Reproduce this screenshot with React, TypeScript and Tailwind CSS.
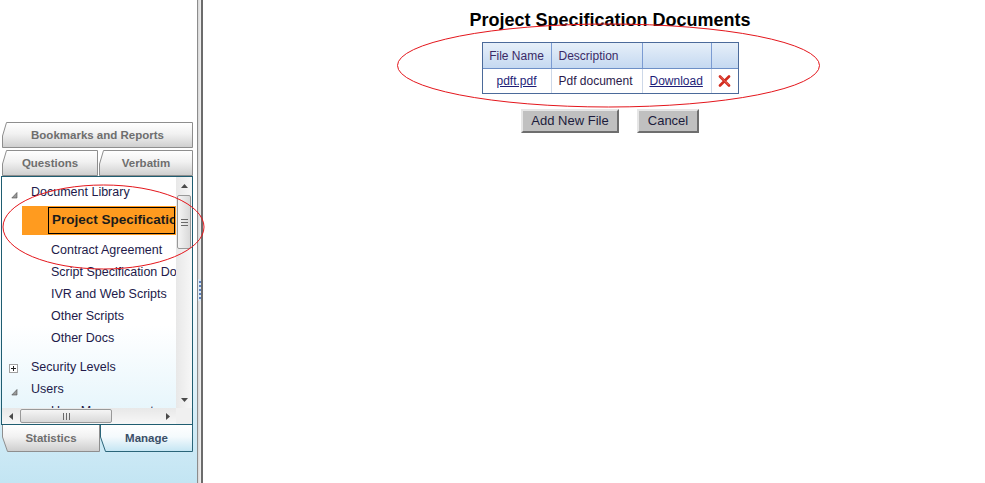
import React from "react";

type TabProps = {
  w: number;
  h: number;
  label: string;
  kind: "top" | "bottom";
  active?: boolean;
  id: string;
  className: string;
};

function Tab({ w, h, label, kind, active, id, className }: TabProps) {
  const fillD =
    kind === "top"
      ? `M0.5 ${h} V ${h - 12} L 4.5 0.5 H ${w - 0.5} V ${h} Z`
      : `M0.5 0 V 12 L 5.5 ${h - 0.5} H ${w - 0.5} V 0 Z`;
  const strokeD =
    kind === "top"
      ? `M0.5 ${h - 0.5} V ${h - 12} L 4.5 0.5 H ${w - 0.5} V ${h - 0.5} Z`
      : `M0.5 0 V 12 L 5.5 ${h - 0.5} H ${w - 0.5} V 0`;
  const stroke = active ? "#2b6579" : "#8e8e8e";
  return (
    <div className={`relative flex items-center justify-center shrink-0 ${className}`}>
      <svg className="absolute inset-0" width={w} height={h}>
        <defs>
          <linearGradient id={`g-${id}`} x1="0" y1="0" x2="0" y2="1">
            {active ? (
              <>
                <stop offset="0" stopColor="#ffffff" />
                <stop offset="0.45" stopColor="#f4fafd" />
                <stop offset="1" stopColor="#c4e5f3" />
              </>
            ) : (
              <>
                <stop offset="0" stopColor="#ffffff" />
                <stop offset="0.45" stopColor="#f1f1f1" />
                <stop offset="1" stopColor="#cdcdcd" />
              </>
            )}
          </linearGradient>
        </defs>
        <path d={fillD} fill={`url(#g-${id})`} />
        <path d={strokeD} fill="none" stroke={stroke} strokeWidth="1" />
      </svg>
      <span
        className={`relative font-bold text-[11.5px] leading-none ${
          kind === "top" ? "mt-[2px]" : "mt-[1px]"
        } ${active ? "text-[#3a4f68]" : "text-[#6e6e6e]"}`}
      >
        {label}
      </span>
    </div>
  );
}

const Arrow = () => (
  <svg width="7" height="8" viewBox="0 0 7 8" className="shrink-0">
    <polygon points="6,1.5 6,7 0.8,7" fill="#9a9a9a" stroke="#4a4a4a" strokeWidth="0.6" />
  </svg>
);

const PlusBox = () => (
  <svg width="9" height="9" viewBox="0 0 9 9" className="shrink-0">
    <rect x="0.5" y="0.5" width="8" height="8" fill="#ffffff" stroke="#a0a0a0" />
    <path d="M2 4.5 H7 M4.5 2 V7" stroke="#222222" strokeWidth="1" />
  </svg>
);

const RedX = () => (
  <svg width="13" height="12" viewBox="0 0 13 12">
    <path d="M2 1.5 L11 10.5 M11 1.5 L2 10.5" stroke="#d22a1e" strokeWidth="2.6" strokeLinecap="round" />
    <path d="M2.5 1.8 L10.5 9.8" stroke="#f07a6a" strokeWidth="0.8" strokeLinecap="round" />
  </svg>
);

function TreeChild({ label }: { label: string }) {
  return (
    <div className="h-[22px] flex items-center pl-[49px] whitespace-nowrap">{label}</div>
  );
}

export default function App() {
  return (
    <div className="relative flex w-[985px] h-[483px] overflow-hidden bg-white font-['Liberation_Sans',Arial,sans-serif]">
      {/* Left column */}
      <aside className="w-[197px] shrink-0 flex flex-col bg-gradient-to-b from-white from-[55%] to-[#c3e5f3]">
        <div className="h-[122px] shrink-0" />
        <Tab
          id="bm"
          w={191}
          h={26}
          kind="top"
          label="Bookmarks and Reports"
          className="w-[191px] h-[26px] ml-[2px]"
        />
        <div className="flex mt-[2px] ml-[2px]">
          <Tab id="q" w={96} h={26} kind="top" label="Questions" className="w-[96px] h-[26px]" />
          <Tab id="v" w={94} h={26} kind="top" label="Verbatim" className="w-[94px] h-[26px] ml-[1px]" />
        </div>

        {/* Tree panel */}
        <div className="ml-[1px] w-[192px] h-[249px] shrink-0 border border-[#1f5d71] flex flex-col bg-gradient-to-b from-white from-[60%] to-[#e3f4fb]">
          <div className="flex flex-1 min-h-0">
            <div className="relative w-[174px] overflow-hidden text-[12.5px] text-[#221a4a]">
              <div className="h-[22px] mt-[4px] flex items-center pl-[9px] whitespace-nowrap">
                <span className="w-[7px] mt-[5px]">
                  <Arrow />
                </span>
                <span className="ml-[13px]">Document Library</span>
              </div>
              <div className="h-[29px] mt-[3px] ml-[20px] bg-[#ff9b1f] flex items-center">
                <div className="ml-[26px] mr-[1px] h-[27px] flex-1 border border-black flex items-center overflow-hidden whitespace-nowrap pl-[3px] font-bold text-[13.5px] text-[#1b1b1b]">
                  Project Specification
                </div>
              </div>
              <div className="mt-[4px]">
                <TreeChild label="Contract Agreement" />
                <TreeChild label="Script Specification Documents" />
                <TreeChild label="IVR and Web Scripts" />
                <TreeChild label="Other Scripts" />
                <TreeChild label="Other Docs" />
              </div>
              <div className="h-[22px] mt-[7px] flex items-center pl-[7px] whitespace-nowrap">
                <span className="mt-[3px]">
                  <PlusBox />
                </span>
                <span className="ml-[13px]">Security Levels</span>
              </div>
              <div className="h-[22px] flex items-center pl-[9px] whitespace-nowrap">
                <span className="w-[7px] mt-[5px]">
                  <Arrow />
                </span>
                <span className="ml-[13px]">Users</span>
              </div>
              <TreeChild label="User Management" />
            </div>

            {/* vertical scrollbar */}
            <div className="w-[16px] flex flex-col bg-gradient-to-r from-[#e8e8e8] to-[#f7f7f7]">
              <div className="h-[17px] flex items-center justify-center">
                <svg width="7" height="4" viewBox="0 0 7 4">
                  <polygon points="0,4 3.5,0 7,4" fill="#4a4a4a" />
                </svg>
              </div>
              <div className="mt-[1px] mx-[1px] h-[54px] rounded-[2px] border border-[#999999] bg-gradient-to-r from-[#f5f5f5] to-[#d9d9d9] flex flex-col items-center justify-center gap-[2px]">
                <div className="w-[7px] h-[1px] bg-[#6a6a6a]" />
                <div className="w-[7px] h-[1px] bg-[#6a6a6a]" />
                <div className="w-[7px] h-[1px] bg-[#6a6a6a]" />
              </div>
              <div className="flex-1" />
              <div className="h-[17px] flex items-center justify-center">
                <svg width="7" height="4" viewBox="0 0 7 4">
                  <polygon points="0,0 3.5,4 7,0" fill="#4a4a4a" />
                </svg>
              </div>
            </div>
          </div>

          {/* horizontal scrollbar */}
          <div className="h-[16px] flex shrink-0">
            <div className="w-[174px] flex items-center bg-gradient-to-b from-[#e8e8e8] to-[#f7f7f7]">
              <div className="w-[17px] flex justify-center">
                <svg width="4" height="7" viewBox="0 0 4 7">
                  <polygon points="4,0 0,3.5 4,7" fill="#4a4a4a" />
                </svg>
              </div>
              <div className="ml-[1px] w-[92px] h-[14px] rounded-[2px] border border-[#999999] bg-gradient-to-b from-[#f5f5f5] to-[#d9d9d9] flex items-center justify-center gap-[2px]">
                <div className="w-[1px] h-[7px] bg-[#6a6a6a]" />
                <div className="w-[1px] h-[7px] bg-[#6a6a6a]" />
                <div className="w-[1px] h-[7px] bg-[#6a6a6a]" />
              </div>
              <div className="flex-1" />
              <div className="w-[17px] flex justify-center">
                <svg width="4" height="7" viewBox="0 0 4 7">
                  <polygon points="0,0 4,3.5 0,7" fill="#4a4a4a" />
                </svg>
              </div>
            </div>
            <div className="w-[16px] bg-[#f0f0f0]" />
          </div>
        </div>

        <div className="flex ml-[2px]">
          <Tab id="st" w={98} h={27} kind="bottom" label="Statistics" className="w-[98px] h-[27px]" />
          <Tab id="mg" w={93} h={27} kind="bottom" label="Manage" active className="w-[93px] h-[27px]" />
        </div>
      </aside>

      {/* Splitter */}
      <div className="w-[6px] shrink-0 border-l border-l-[#8c8c8c] border-r-2 border-r-[#6c6c6c] bg-gradient-to-r from-[#d6d6d6] to-[#f2f2f2] flex flex-col items-end">
        <div className="mt-[279px] w-[3px] h-[22px] bg-[#dcebf7] flex flex-col items-center justify-center gap-[2px]">
          <div className="w-[2px] h-[2px] bg-[#5b7fbf]" />
          <div className="w-[2px] h-[2px] bg-[#5b7fbf]" />
          <div className="w-[2px] h-[2px] bg-[#5b7fbf]" />
          <div className="w-[2px] h-[2px] bg-[#5b7fbf]" />
          <div className="w-[2px] h-[2px] bg-[#5b7fbf]" />
        </div>
      </div>

      {/* Main */}
      <main className="flex-1 flex flex-col items-center pl-[32px] pt-[10px]">
        <h1 className="text-[18px] leading-[21px] font-bold text-black whitespace-nowrap">
          Project Specification Documents
        </h1>
        <div className="mt-[11px] w-[257px] border border-[#4b6a9a] text-[12px]">
          <div className="grid grid-cols-[69px_91px_69px_26px] h-[26px] border-b border-b-[#6d8fc6] bg-gradient-to-b from-[#e6eff9] to-[#c5d9f1] text-[#3b2a66]">
            <div className="border-r border-r-[#7b9bd2] flex items-center justify-center">File Name</div>
            <div className="border-r border-r-[#7b9bd2] flex items-center pl-[7px]">Description</div>
            <div className="border-r border-r-[#7b9bd2]" />
            <div />
          </div>
          <div className="grid grid-cols-[69px_91px_69px_26px] h-[24px] bg-white">
            <div className="border-r border-r-[#cdd8e8] flex items-center justify-center">
              <a className="underline text-[#1e1e78]">pdft.pdf</a>
            </div>
            <div className="border-r border-r-[#cdd8e8] flex items-center pl-[7px] text-[#2a1a4a] whitespace-nowrap">
              Pdf document
            </div>
            <div className="border-r border-r-[#cdd8e8] flex items-center pl-[7px]">
              <a className="underline text-[#1e1e78]">Download</a>
            </div>
            <div className="flex items-center justify-center">
              <RedX />
            </div>
          </div>
        </div>
        <div className="mt-[15px] flex gap-[18px]">
          <button className="w-[98px] h-[24px] bg-[#c0c0c0] border-2 border-t-[#e6e6e6] border-l-[#e6e6e6] border-r-[#6e6e6e] border-b-[#6e6e6e] text-[13px] text-[#1c1c3c] flex items-center justify-center">
            Add New File
          </button>
          <button className="w-[62px] h-[24px] bg-[#c0c0c0] border-2 border-t-[#e6e6e6] border-l-[#e6e6e6] border-r-[#6e6e6e] border-b-[#6e6e6e] text-[13px] text-[#1c1c3c] flex items-center justify-center">
            Cancel
          </button>
        </div>
      </main>

      {/* Red annotation ellipses */}
      <svg className="absolute inset-0 pointer-events-none" width="985" height="483">
        <ellipse cx="608.5" cy="65.5" rx="211" ry="41.5" fill="none" stroke="#e4161c" strokeWidth="1" />
        <ellipse cx="103.5" cy="227" rx="100.5" ry="42" fill="none" stroke="#e4161c" strokeWidth="1" />
      </svg>
    </div>
  );
}
